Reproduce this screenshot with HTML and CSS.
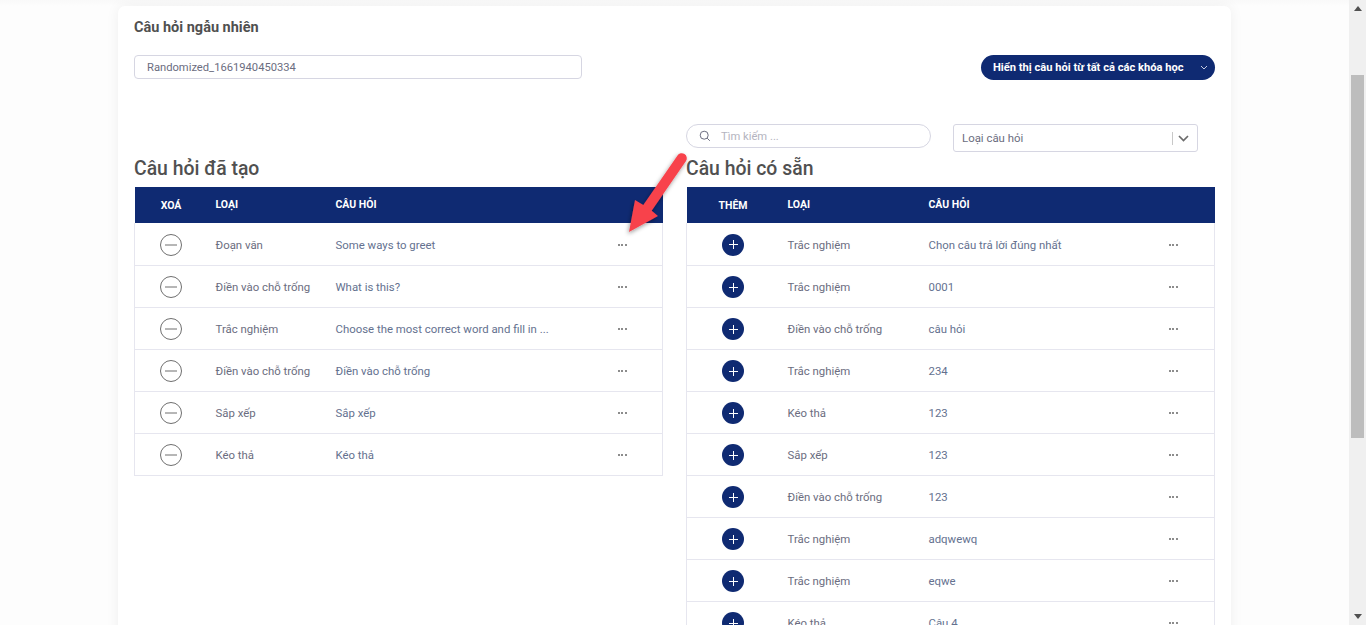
FILE: index.html
```html
<!DOCTYPE html>
<html lang="vi">
<head>
  <meta charset="UTF-8" />
  <title>Câu hỏi ngẫu nhiên</title>
  <link rel="stylesheet" href="styles.css">
</head>
<body>
  <div class="page">
    <main class="content">
      <section class="card">
        <h1 class="card-title">Câu hỏi ngẫu nhiên</h1>

        <div class="top-row">
          <input class="name-input" type="text" value="Randomized_1661940450334" />
          <button class="course-btn" type="button">
            <span>Hiển thị câu hỏi từ tất cả các khóa học</span>
            <svg width="8" height="5" viewBox="0 0 8 5"><path d="M1 1l3 3 3-3" fill="none" stroke="#c5cbe0" stroke-width="1"/></svg>
          </button>
        </div>

        <div class="panels">
          <div class="toolbar">
            <div class="search">
              <svg width="12" height="12" viewBox="0 0 12 12"><circle cx="5.2" cy="5.2" r="4" fill="none" stroke="#6b6d80" stroke-width="1"/><path d="M8.2 8.2l2.6 2.6" stroke="#6b6d80" stroke-width="1"/></svg>
              <span>Tìm kiếm ...</span>
            </div>
            <div class="type-select">
              <span class="type-label">Loại câu hỏi</span>
              <span class="type-sep"></span>
              <svg width="11" height="7" viewBox="0 0 11 7"><path d="M1 1l4.5 4.5L10 1" fill="none" stroke="#6b6b6b" stroke-width="1.7"/></svg>
            </div>
          </div>

          <h2 class="panel-title left-title">Câu hỏi đã tạo</h2>
          <h2 class="panel-title right-title">Câu hỏi có sẵn</h2>

          <table class="q-table left-table">
            <colgroup><col class="l1"><col class="l2"><col class="l3"><col class="l4"></colgroup>
            <thead><tr><th class="mid">XOÁ</th><th>LOẠI</th><th>CÂU HỎI</th><th></th></tr></thead>
            <tbody id="createdRows"></tbody>
          </table>

          <table class="q-table right-table">
            <colgroup><col class="r1"><col class="r2"><col class="r3"><col class="r4"></colgroup>
            <thead><tr><th class="mid">THÊM</th><th>LOẠI</th><th>CÂU HỎI</th><th></th></tr></thead>
            <tbody id="availableRows"></tbody>
          </table>
        </div>
      </section>
    </main>

    <aside class="scrollbar">
      <span class="arrow-up"></span>
      <div class="track"><div class="thumb"></div></div>
      <span class="arrow-down"></span>
    </aside>

    <svg class="callout" width="80" height="100" viewBox="0 0 80 100">
      <defs>
        <filter id="arrowShadow" x="-30%" y="-30%" width="160%" height="160%">
          <feDropShadow dx="-1" dy="2" stdDeviation="2" flood-color="#000" flood-opacity="0.4"/>
        </filter>
      </defs>
      <path filter="url(#arrowShadow)" fill="#f8434c" d="M53.5 5.5A5 5 0 0 1 62 11L27.7 60.7L34 66L5 82L11 50L19.3 55Z"/>
    </svg>
  </div>

  <script>
    const created = [
      ["Đoạn văn", "Some ways to greet"],
      ["Điền vào chỗ trống", "What is this?"],
      ["Trắc nghiệm", "Choose the most correct word and fill in ..."],
      ["Điền vào chỗ trống", "Điền vào chỗ trống"],
      ["Sắp xếp", "Sắp xếp"],
      ["Kéo thả", "Kéo thả"]
    ];
    const available = [
      ["Trắc nghiệm", "Chọn câu trả lời đúng nhất"],
      ["Trắc nghiệm", "0001"],
      ["Điền vào chỗ trống", "câu hỏi"],
      ["Trắc nghiệm", "234"],
      ["Kéo thả", "123"],
      ["Sắp xếp", "123"],
      ["Điền vào chỗ trống", "123"],
      ["Trắc nghiệm", "adqwewq"],
      ["Trắc nghiệm", "eqwe"],
      ["Kéo thả", "Câu 4"]
    ];

    const removeIcon = `<span class="round-btn remove"><svg width="12" height="2" viewBox="0 0 12 2"><path d="M0 1h12" stroke="#6f6f6f" stroke-width="1"/></svg></span>`;
    const addIcon = `<span class="round-btn add"><svg width="9" height="9" viewBox="0 0 9 9"><path d="M4.5 0v9M0 4.5h9" stroke="#fff" stroke-width="1"/></svg></span>`;

    function fillRows(id, rows, icon) {
      document.getElementById(id).innerHTML = rows.map(r => `
        <tr>
          <td class="mid">${icon}</td>
          <td>${r[0]}</td>
          <td class="q-text">${r[1]}</td>
          <td class="mid"><span class="dots"><i></i><i></i><i></i></span></td>
        </tr>`).join('');
    }

    fillRows("createdRows", created, removeIcon);
    fillRows("availableRows", available, addIcon);
  </script>
</body>
</html>
```

FILE: styles.css
```css
:root {
  --navy: #0f2a72;
  --line: #e6e6ef;
  --text: #6b6d80;
  --title: #505050;
}

body {
  margin: 0;
  font-family: 'Roboto', sans-serif;
  background-color: #fff;
  color: var(--text);
}

.page {
  position: relative;
  display: flex;
  height: 625px;
  overflow: hidden;
}

.content {
  flex: 1;
  padding: 6px 118px 0;
  background: linear-gradient(#f9f9f9, #fdfdfd 6px);
}

.card {
  box-sizing: border-box;
  width: 1113px;
  height: 800px;
  padding: 14px 16px 0;
  background-color: #fff;
  border-radius: 7px;
  box-shadow: 0 0 14px rgba(0, 0, 0, 0.06);
}

.card-title {
  margin: 0;
  font-size: 14.5px;
  line-height: 16px;
  font-weight: 700;
  color: var(--title);
}

.top-row {
  display: flex;
  justify-content: space-between;
  align-items: flex-start;
  margin-top: 19px;
}

.name-input {
  box-sizing: border-box;
  width: 448px;
  height: 24px;
  padding: 0 12px;
  border: 1px solid #d6d6e2;
  border-radius: 4px;
  font-family: inherit;
  font-size: 11.2px;
  color: var(--text);
  outline: none;
}

.course-btn {
  display: flex;
  align-items: center;
  justify-content: space-between;
  box-sizing: border-box;
  width: 234px;
  height: 25px;
  padding: 0 7px 0 12px;
  border: none;
  border-radius: 13px;
  background-color: var(--navy);
  color: #fff;
  font-family: inherit;
  font-size: 11.15px;
  font-weight: 700;
}

.panels {
  display: grid;
  grid-template-columns: 528px 529px;
  column-gap: 24px;
  margin-top: 44px;
  align-items: start;
}

.toolbar {
  grid-column: 2;
  display: flex;
  align-items: flex-start;
  gap: 22px;
}

.search {
  box-sizing: border-box;
  display: flex;
  align-items: center;
  gap: 10px;
  width: 245px;
  height: 24px;
  padding: 0 11px 0 12px;
  border: 1px solid #d6d6e2;
  border-radius: 12px;
  font-size: 11.2px;
  color: #b4b4c0;
}

.type-select {
  box-sizing: border-box;
  display: flex;
  align-items: center;
  width: 245px;
  height: 28px;
  padding: 0 8px;
  border: 1px solid #d6d6e2;
  border-radius: 3px;
  font-size: 11.4px;
}

.type-label {
  flex: 1;
}

.type-sep {
  width: 1px;
  height: 13px;
  margin-right: 5px;
  background-color: #c8c8c8;
}

.panel-title {
  grid-row: 2;
  margin: 5px 0 6px;
  font-size: 19.4px;
  line-height: 24px;
  font-weight: 500;
  color: var(--title);
}

.left-title { grid-column: 1; }
.right-title { grid-column: 2; }

.q-table {
  grid-row: 3;
  width: 528px;
  table-layout: fixed;
  border-collapse: collapse;
  font-size: 11.4px;
}

.left-table { grid-column: 1; }
.right-table { grid-column: 2; }

.l1 { width: 73px; }
.l2 { width: 120px; }
.l3 { width: 254px; }
.l4 { width: 81px; }
.r1 { width: 93px; }
.r2 { width: 141px; }
.r3 { width: 211px; }
.r4 { width: 83px; }

.q-table th {
  height: 36px;
  padding: 0 8px 2px;
  box-sizing: border-box;
  background-color: var(--navy);
  color: #fff;
  font-size: 10.5px;
  font-weight: 700;
  text-align: left;
}

.q-table td {
  box-sizing: border-box;
  height: 42px;
  padding: 2px 8px 0;
  border-bottom: 1px solid var(--line);
}

.q-table td:first-child { border-left: 1px solid var(--line); }
.q-table td:last-child { border-right: 1px solid var(--line); }

.q-table .mid {
  padding: 0;
  text-align: center;
}

.q-text {
  color: #64718f;
}

.round-btn {
  box-sizing: border-box;
  display: inline-flex;
  align-items: center;
  justify-content: center;
  width: 22px;
  height: 22px;
  margin-top: 2px;
  border-radius: 50%;
  vertical-align: middle;
}

.round-btn.remove {
  border: 1px solid #6f6f6f;
}

.round-btn.add {
  background-color: var(--navy);
}

.dots {
  display: inline-flex;
  gap: 1.5px;
  margin-left: 1px;
  vertical-align: middle;
}

.dots i {
  width: 2px;
  height: 2px;
  border-radius: 50%;
  background-color: #666;
}

.scrollbar {
  display: flex;
  flex-direction: column;
  align-items: center;
  width: 17px;
  background-color: #f0f0f0;
}

.arrow-up,
.arrow-down {
  flex: none;
  width: 0;
  height: 0;
  margin: 6px 0;
  border-left: 4px solid transparent;
  border-right: 4px solid transparent;
}

.arrow-up { border-bottom: 5px solid #505050; }
.arrow-down { border-top: 5px solid #505050; }

.track {
  flex: 1;
  width: 100%;
  padding: 58px 2px 0;
  box-sizing: border-box;
}

.thumb {
  height: 363px;
  background-color: #bdbdbd;
}

.callout {
  position: absolute;
  left: 624px;
  top: 150px;
}
```
